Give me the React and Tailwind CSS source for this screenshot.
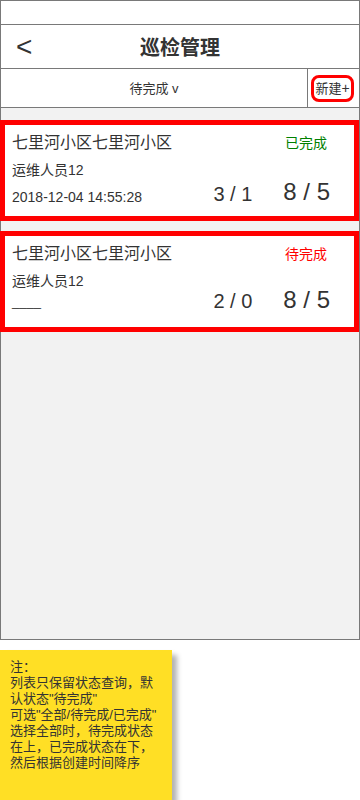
import React from "react";

const FONT = "font-['Liberation_Sans','Noto_Sans_CJK_SC',sans-serif]";

function Card({ title, status, statusColor, person, footLeft, a, b, small }) {
  return (
    <div className="-ml-px w-[359px] h-[101px] border-[5px] border-[#ff0000] bg-white px-[7px] text-[#333333]">
      <div className="h-[36px] flex items-center justify-between">
        <span className="text-[16px] leading-[20px]">{title}</span>
        <span className={`text-[14px] leading-[18px] mr-[20px] ${statusColor}`}>{status}</span>
      </div>
      <div className="h-[18px] flex items-center">
        <span className="text-[14px] leading-[18px]">{person}</span>
      </div>
      <div className="flex items-start">
        <span className={small ? "mt-[4px] text-[13px] leading-[16px]" : "mt-[10px] text-[14px] leading-[16px]"}>{footLeft}</span>
        <div className="ml-auto mr-[17px] flex items-start gap-[31px]">
          <span className={`text-[20px] leading-[20px] ${small ? "mt-[1px]" : "mt-[5px]"}`}>{a}</span>
          <span className={`text-[24px] leading-[24px] ${small ? "mt-[-2px]" : "mt-[1px]"}`}>{b}</span>
        </div>
      </div>
    </div>
  );
}

export default function App() {
  return (
    <div className={`w-[360px] h-[800px] bg-white overflow-hidden ${FONT}`}>
      <div className="w-[360px] border border-[#797979]">
        <div className="h-[23px] bg-white" />
        <div className="h-[44px] border-t border-[#797979] grid grid-cols-[60px_1fr_60px] items-center">
          <span className="pl-[15px] text-[28px] leading-[28px] text-[#333333] mt-[1px]">&lt;</span>
          <span className="text-center text-[20px] leading-[24px] font-bold text-[#333333] mt-[3px]">巡检管理</span>
          <span />
        </div>
        <div className="h-[39px] border-t border-[#797979] flex">
          <div className="flex-1 border-r border-[#797979] flex items-center justify-center">
            <span className="text-[13px] leading-[16px] text-[#333333] mt-[1px]">待完成 v</span>
          </div>
          <div className="w-[51px] flex items-center">
            <div className="ml-[3px] w-[43px] h-[27px] border-[3px] border-[#ff0000] rounded-[8px] flex items-center justify-center">
              <span className="text-[13px] leading-[16px] text-[#333333] whitespace-nowrap">
                新建<span className="text-[14px]">+</span>
              </span>
            </div>
          </div>
        </div>
        <div className="h-[532px] border-t border-[#797979] bg-[#f2f2f2] pt-[12px] flex flex-col gap-[10px]">
          <Card
            title="七里河小区七里河小区"
            status="已完成"
            statusColor="text-[#008000]"
            person="运维人员12"
            footLeft="2018-12-04 14:55:28"
            a="3 / 1"
            b="8 / 5"
          />
          <Card
            title="七里河小区七里河小区"
            status="待完成"
            statusColor="text-[#ff0000]"
            person="运维人员12"
            footLeft="____"
            a="2 / 0"
            b="8 / 5"
            small
          />
        </div>
      </div>
      <div className="mt-[10px] w-[172px] h-[150px] bg-[#ffdf25] shadow-[5px_5px_5px_rgba(0,0,0,0.3)] px-[10px] pt-[9px] text-[13px] leading-[16px] text-[#333333]">
        <div>注：</div>
        <div>列表只保留状态查询，默认状态"待完成"</div>
        <div>可选"全部/待完成/已完成"</div>
        <div>选择全部时，待完成状态在上，已完成状态在下，然后根据创建时间降序</div>
      </div>
    </div>
  );
}
